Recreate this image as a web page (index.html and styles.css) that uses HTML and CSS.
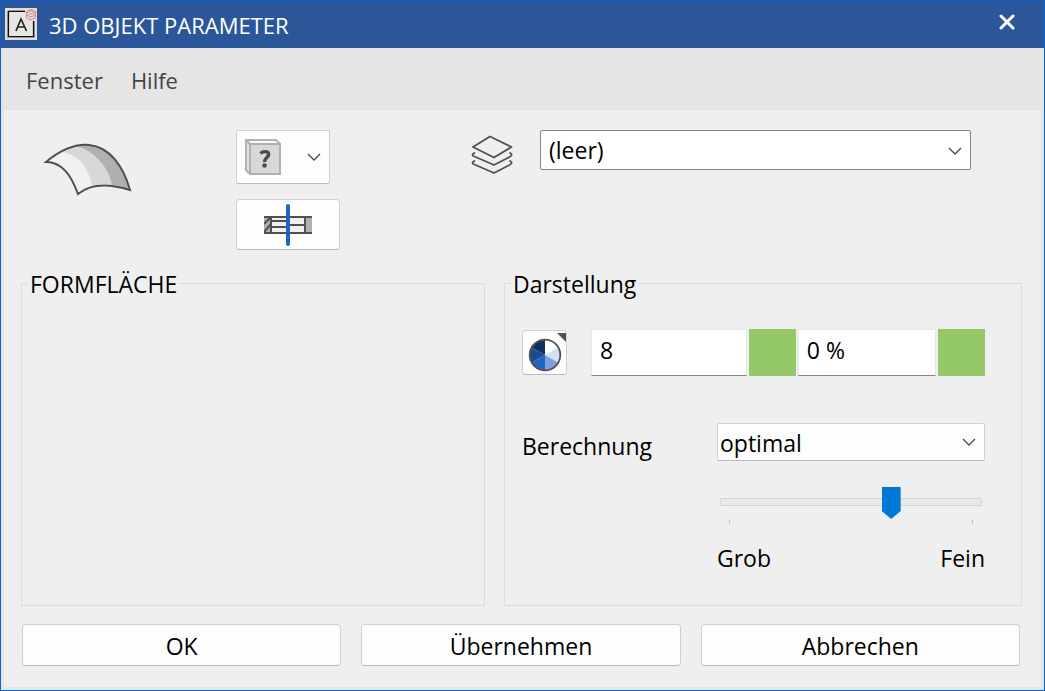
FILE: index.html
```html
<!DOCTYPE html>
<html lang="de">
<head>
<meta charset="utf-8">
<meta name="viewport" content="width=device-width, initial-scale=1">
<title>3D OBJEKT PARAMETER</title>
<link rel="stylesheet" href="styles.css">
</head>
<body>
<div class="dialog">
  <header class="titlebar">
    <svg class="logo" width="32" height="32" viewBox="0 0 32 32" aria-hidden="true">
      <rect width="32" height="32" fill="#dededc"/>
      <path d="M3.5 2.5H29.500V29.500H2.500V3" fill="#e6e6e4" stroke="#999" stroke-width="1"/>
      <path d="M20 3.500H3.500V28.500H28.500V13" fill="none" stroke="#111" stroke-width="1.200"/>
      <path d="M11 23L16 11L21.500 23M13 19H19.500" fill="none" stroke="#222" stroke-width="1.700"/>
      <rect x="20" y="0" width="12" height="13" fill="#dededc"/>
      <g fill="none" stroke="#dd8580" stroke-width="1">
        <path d="M26 1.500L30.500 3.500V9.500L26 12L21.500 9.500V3.500Z"/>
        <path d="M21.500 4L26 6L30.500 4M22 7L26 9L30 7M24 3.500L26 2.500L28 3.500"/>
      </g>
    </svg>
    <h1 class="title">3D OBJEKT PARAMETER</h1>
    <button class="close" type="button" aria-label="Schließen">
      <svg width="16" height="16" viewBox="0 0 16 16"><path d="M2 2L14 14M14 2L2 14" fill="none" stroke="#fff" stroke-width="3" stroke-linecap="round"/></svg>
    </button>
  </header>

  <nav class="menubar">
    <button class="menu" type="button">Fenster</button>
    <button class="menu" type="button">Hilfe</button>
  </nav>

  <main class="content">
    <div class="top">
      <svg class="surface" width="90" height="56" viewBox="0 0 90 56" aria-hidden="true">
        <path d="M3 22C20 8 34 4 46 5C66 7 80 25 87 50C68 44 48 43 35 54C28 35 19 22 3 22Z" fill="#f1f1f1"/>
        <path d="M20 12L33 6C49 10 65 25 69 45C62 44 55 44 49 46C46 29 36 15 20 12Z" fill="#d8d8d8"/>
        <path d="M33 6C58 0 76 12 87 50L69 45C65 25 49 10 33 6Z" fill="#b0b0b0"/>
        <path d="M3 22C20 8 34 4 46 5C66 7 80 25 87 50C68 44 48 43 35 54C28 35 19 22 3 22Z" fill="none" stroke="#505050" stroke-width="2"/>
      </svg>
      <div class="tools">
        <button class="tool tool-type" type="button" aria-label="Objekttyp">
          <svg width="36" height="36" viewBox="0 0 36 36">
            <path d="M1 1H31L35 5V35H5L1 31Z" fill="#e3e3e3" stroke="#b1b1b1" stroke-width="2"/>
            <path d="M2 2H30L34 5H5Z" fill="#fafafa"/>
            <path d="M1 1L5 5" stroke="#b1b1b1" stroke-width="2"/>
            <rect x="5" y="5" width="30" height="30" fill="#d8d8d8" stroke="#b1b1b1" stroke-width="2"/>
            <path d="M15.500 14.500C18 12 24.500 11.500 23.500 16C23 19 19.500 19 19.500 23" fill="none" stroke="#4c4c4c" stroke-width="3.400"/>
            <circle cx="19.500" cy="26.500" r="2.300" fill="#4c4c4c"/>
          </svg>
          <svg width="14" height="8" viewBox="0 0 14 8"><path d="M1 1L7 7L13 1" fill="none" stroke="#484848" stroke-width="1.300"/></svg>
        </button>
        <button class="tool tool-section" type="button" aria-label="Schnitt">
          <svg width="48" height="42" viewBox="0 0 48 42">
            <rect x="0" y="13" width="48" height="16" fill="#f0f0f0"/>
            <rect x="0" y="13" width="7" height="16" fill="#b0b0b0"/>
            <rect x="41" y="13" width="7" height="16" fill="#b0b0b0"/>
            <path d="M0 20L7 13M0 28L7 20" stroke="#505050" stroke-width="2"/>
            <path d="M0 13H48M0 29H48M7 13V29M41 13V29M7 17H24M7 23H24M24 21H41" fill="none" stroke="#505050" stroke-width="2"/>
            <path d="M24 2V40" stroke="#2063c5" stroke-width="4" stroke-linecap="round"/>
          </svg>
        </button>
      </div>
      <div class="layer">
        <svg class="layers" width="42" height="40" viewBox="0 0 42 40" aria-hidden="true">
          <g fill="none" stroke="#505050" stroke-width="1.800" stroke-linejoin="round" stroke-linecap="round">
            <path d="M19 1.500L2 12L23 22.500L40.500 12Z"/>
            <path d="M3.500 18Q-0.500 19.500 3.500 21.500L23 30L38.500 22Q42.500 19.500 39 18"/>
            <path d="M3.500 26Q-0.500 27.500 3.500 29.500L23 38L38.500 30Q42.500 27.500 39 26"/>
          </g>
        </svg>
        <div class="combo combo-layer">
          <select class="select" aria-label="Ebene"><option>(leer)</option></select>
          <svg class="chevron" width="14" height="8" viewBox="0 0 14 8" aria-hidden="true"><path d="M1 1L7 7L13 1" fill="none" stroke="#484848" stroke-width="1.300"/></svg>
        </div>
      </div>
    </div>

    <div class="groups">
      <fieldset class="group">
        <legend class="legend">FORMFLÄCHE</legend>
      </fieldset>
      <fieldset class="group">
        <legend class="legend">Darstellung</legend>
        <div class="display">
          <div class="values">
            <button class="color" type="button" aria-label="Farbe">
              <svg width="43" height="43" viewBox="0 0 43 43">
                <path d="M34 2H44V12Z" fill="#505050"/>
                <g transform="translate(22 24)">
                  <path d="M0 0V-15A15 15 0 0 1 13 -7.500Z" fill="#fff"/>
                  <path d="M0 0L13 -7.500A15 15 0 0 1 13 7.500Z" fill="#d2e0f3"/>
                  <path d="M0 0L13 7.500A15 15 0 0 1 0 15Z" fill="#7ba1dc"/>
                  <path d="M0 0V15A15 15 0 0 1 -13 7.500Z" fill="#2063c5"/>
                  <path d="M0 0L-13 7.500A15 15 0 0 1 -13 -7.500Z" fill="#194b91"/>
                  <path d="M0 0L-13 -7.500A15 15 0 0 1 0 -15Z" fill="#12305e"/>
                  <circle r="15.300" fill="none" stroke="#505050" stroke-width="1.800"/>
                </g>
              </svg>
            </button>
            <input class="field field-color" type="text" value="8" aria-label="Farbnummer">
            <span class="swatch"></span>
            <input class="field field-percent" type="text" value="0 %" aria-label="Transparenz">
            <span class="swatch"></span>
          </div>
          <div class="calc">
            <label class="calc-label" for="calc">Berechnung</label>
            <div class="calc-controls">
              <div class="combo combo-calc">
                <select class="select" id="calc"><option>optimal</option></select>
                <svg class="chevron" width="14" height="8" viewBox="0 0 14 8" aria-hidden="true"><path d="M1 1L7 7L13 1" fill="none" stroke="#484848" stroke-width="1.300"/></svg>
              </div>
              <input class="slider" type="range" min="0" max="3" value="2" aria-label="Genauigkeit">
              <div class="ticks"><span class="tick"></span><span class="tick"></span></div>
              <div class="range-labels"><span>Grob</span><span>Fein</span></div>
            </div>
          </div>
        </div>
      </fieldset>
    </div>

    <footer class="actions">
      <button class="action" type="button">OK</button>
      <button class="action" type="button">Übernehmen</button>
      <button class="action" type="button">Abbrechen</button>
    </footer>
  </main>
</div>
</body>
</html>
```
FILE: styles.css
```css
* {
  box-sizing: border-box;
}

body {
  margin: 0;
  font: 23px/32px "Open Sans", "Noto Sans", sans-serif;
  color: #000;
}

button,
input,
select {
  margin: 0;
  font: inherit;
  color: inherit;
}

svg {
  display: block;
  flex: none;
}

.dialog {
  display: flex;
  flex-direction: column;
  min-height: 100vh;
  border: 1px solid #0a62cb;
  background: #e5e5e5;
}

.titlebar {
  display: flex;
  align-items: center;
  height: 47px;
  padding: 0 29px 0 4px;
  background: #2b579a;
  color: #fff;
}

.logo {
  margin-bottom: 2px;
}

.title {
  flex: 1;
  margin: 0 0 0 12px;
  font-size: 22px;
  font-weight: 400;
}

.close {
  padding: 0;
  margin-bottom: 6px;
  border: 0;
  background: none;
}

.menubar {
  display: flex;
  align-items: center;
  gap: 28px;
  height: 62px;
  padding: 2px 25px 0;
}

.menu {
  padding: 0;
  border: 0;
  background: none;
  color: #444;
  font-size: 22px;
}

.content {
  display: flex;
  flex: 1;
  flex-direction: column;
  margin: 0 3px 3px;
  padding: 20px 19px 21px 17px;
  background: #efefef;
}

.top {
  display: flex;
  align-items: flex-start;
  padding: 0 51px 0 22px;
}

.surface {
  margin-top: 10px;
}

.tools {
  display: flex;
  flex-direction: column;
  align-items: flex-start;
  gap: 15px;
  margin: 0 131px 0 103px;
}

.tool,
.color,
.action {
  border: 1px solid #d0d0d0;
  border-bottom-color: #bbb;
  border-radius: 4px;
  background: #fdfdfd;
}

.tool {
  display: flex;
  align-items: center;
}

.tool-type {
  justify-content: space-between;
  width: 94px;
  height: 54px;
  padding: 0 8px;
  border-radius: 2px;
}

.tool-section {
  justify-content: center;
  width: 104px;
  height: 51px;
  padding: 0;
}

.layer {
  display: flex;
  flex: 1;
  gap: 27px;
}

.layers {
  margin-top: 5px;
}

.combo {
  position: relative;
  flex: 1;
}

.select {
  display: block;
  width: 100%;
  border-radius: 2px;
  appearance: none;
}

.combo-layer .select {
  height: 40px;
  padding: 0 32px 0 8px;
  border: 1px solid #868686;
  background: #fff;
}

.combo-calc .select {
  height: 38px;
  padding: 2px 32px 0 2px;
  border: 1px solid #d0d0d0;
  border-bottom-color: #bbb;
  background: #fdfdfd;
}

.chevron {
  position: absolute;
  top: 50%;
  right: 9px;
  margin-top: -4px;
  pointer-events: none;
}

.combo-layer .chevron {
  margin-top: -6px;
}

.groups {
  display: grid;
  flex: 1;
  grid-template-columns: 464fr 518fr;
  gap: 19px;
  margin: 17px 0 18px;
}

.group {
  min-width: 0;
  margin: 0;
  padding: 0 6px;
  border: 1px solid #dcdcdc;
}

.legend {
  padding: 2px 2px 0;
  line-height: 30px;
}

.display {
  padding: 30px 30px 0 11px;
}

.values {
  display: flex;
  align-items: center;
  gap: 2px;
}

.color {
  flex: none;
  width: 45px;
  height: 45px;
  margin-right: 22px;
  padding: 0;
  overflow: hidden;
}

.field {
  flex: 157 1 0;
  min-width: 0;
  height: 47px;
  padding: 0 8px 6px;
  border: 1px solid #e8e8e8;
  border-bottom-color: #868686;
  border-radius: 0;
  background: #fff;
}

.field-percent {
  flex-grow: 137;
}

.swatch {
  flex: none;
  width: 47px;
  height: 47px;
  background: #95c968;
}

.calc {
  display: flex;
  align-items: flex-start;
  justify-content: space-between;
  margin-top: 47px;
}

.calc-label {
  margin-top: 7px;
}

.calc-controls {
  flex: 0 1 268px;
}

.slider {
  display: block;
  width: calc(100% - 6px);
  height: 32px;
  margin: 25px 3px 0;
  background: none;
  appearance: none;
}

.slider::-webkit-slider-runnable-track {
  height: 8px;
  border: 1px solid #d3d6d5;
  background: #e7eaea;
}

.slider::-webkit-slider-thumb {
  width: 19px;
  height: 32px;
  margin-top: -12px;
  background: #0078d7;
  clip-path: polygon(0 0, 100% 0, 100% 75%, 50% 100%, 0 75%);
  appearance: none;
}

.ticks {
  display: flex;
  justify-content: space-between;
  margin: 2px 9px 0;
  padding: 0 3px;
}

.tick {
  width: 1px;
  height: 4px;
  background: #c4c4c4;
}

.range-labels {
  display: flex;
  justify-content: space-between;
  margin-top: 18px;
}

.actions {
  display: grid;
  grid-template-columns: repeat(3, 1fr);
  gap: 20px;
  padding: 0 2px 0 1px;
}

.action {
  height: 42px;
  padding: 2px 0 0;
}
```
